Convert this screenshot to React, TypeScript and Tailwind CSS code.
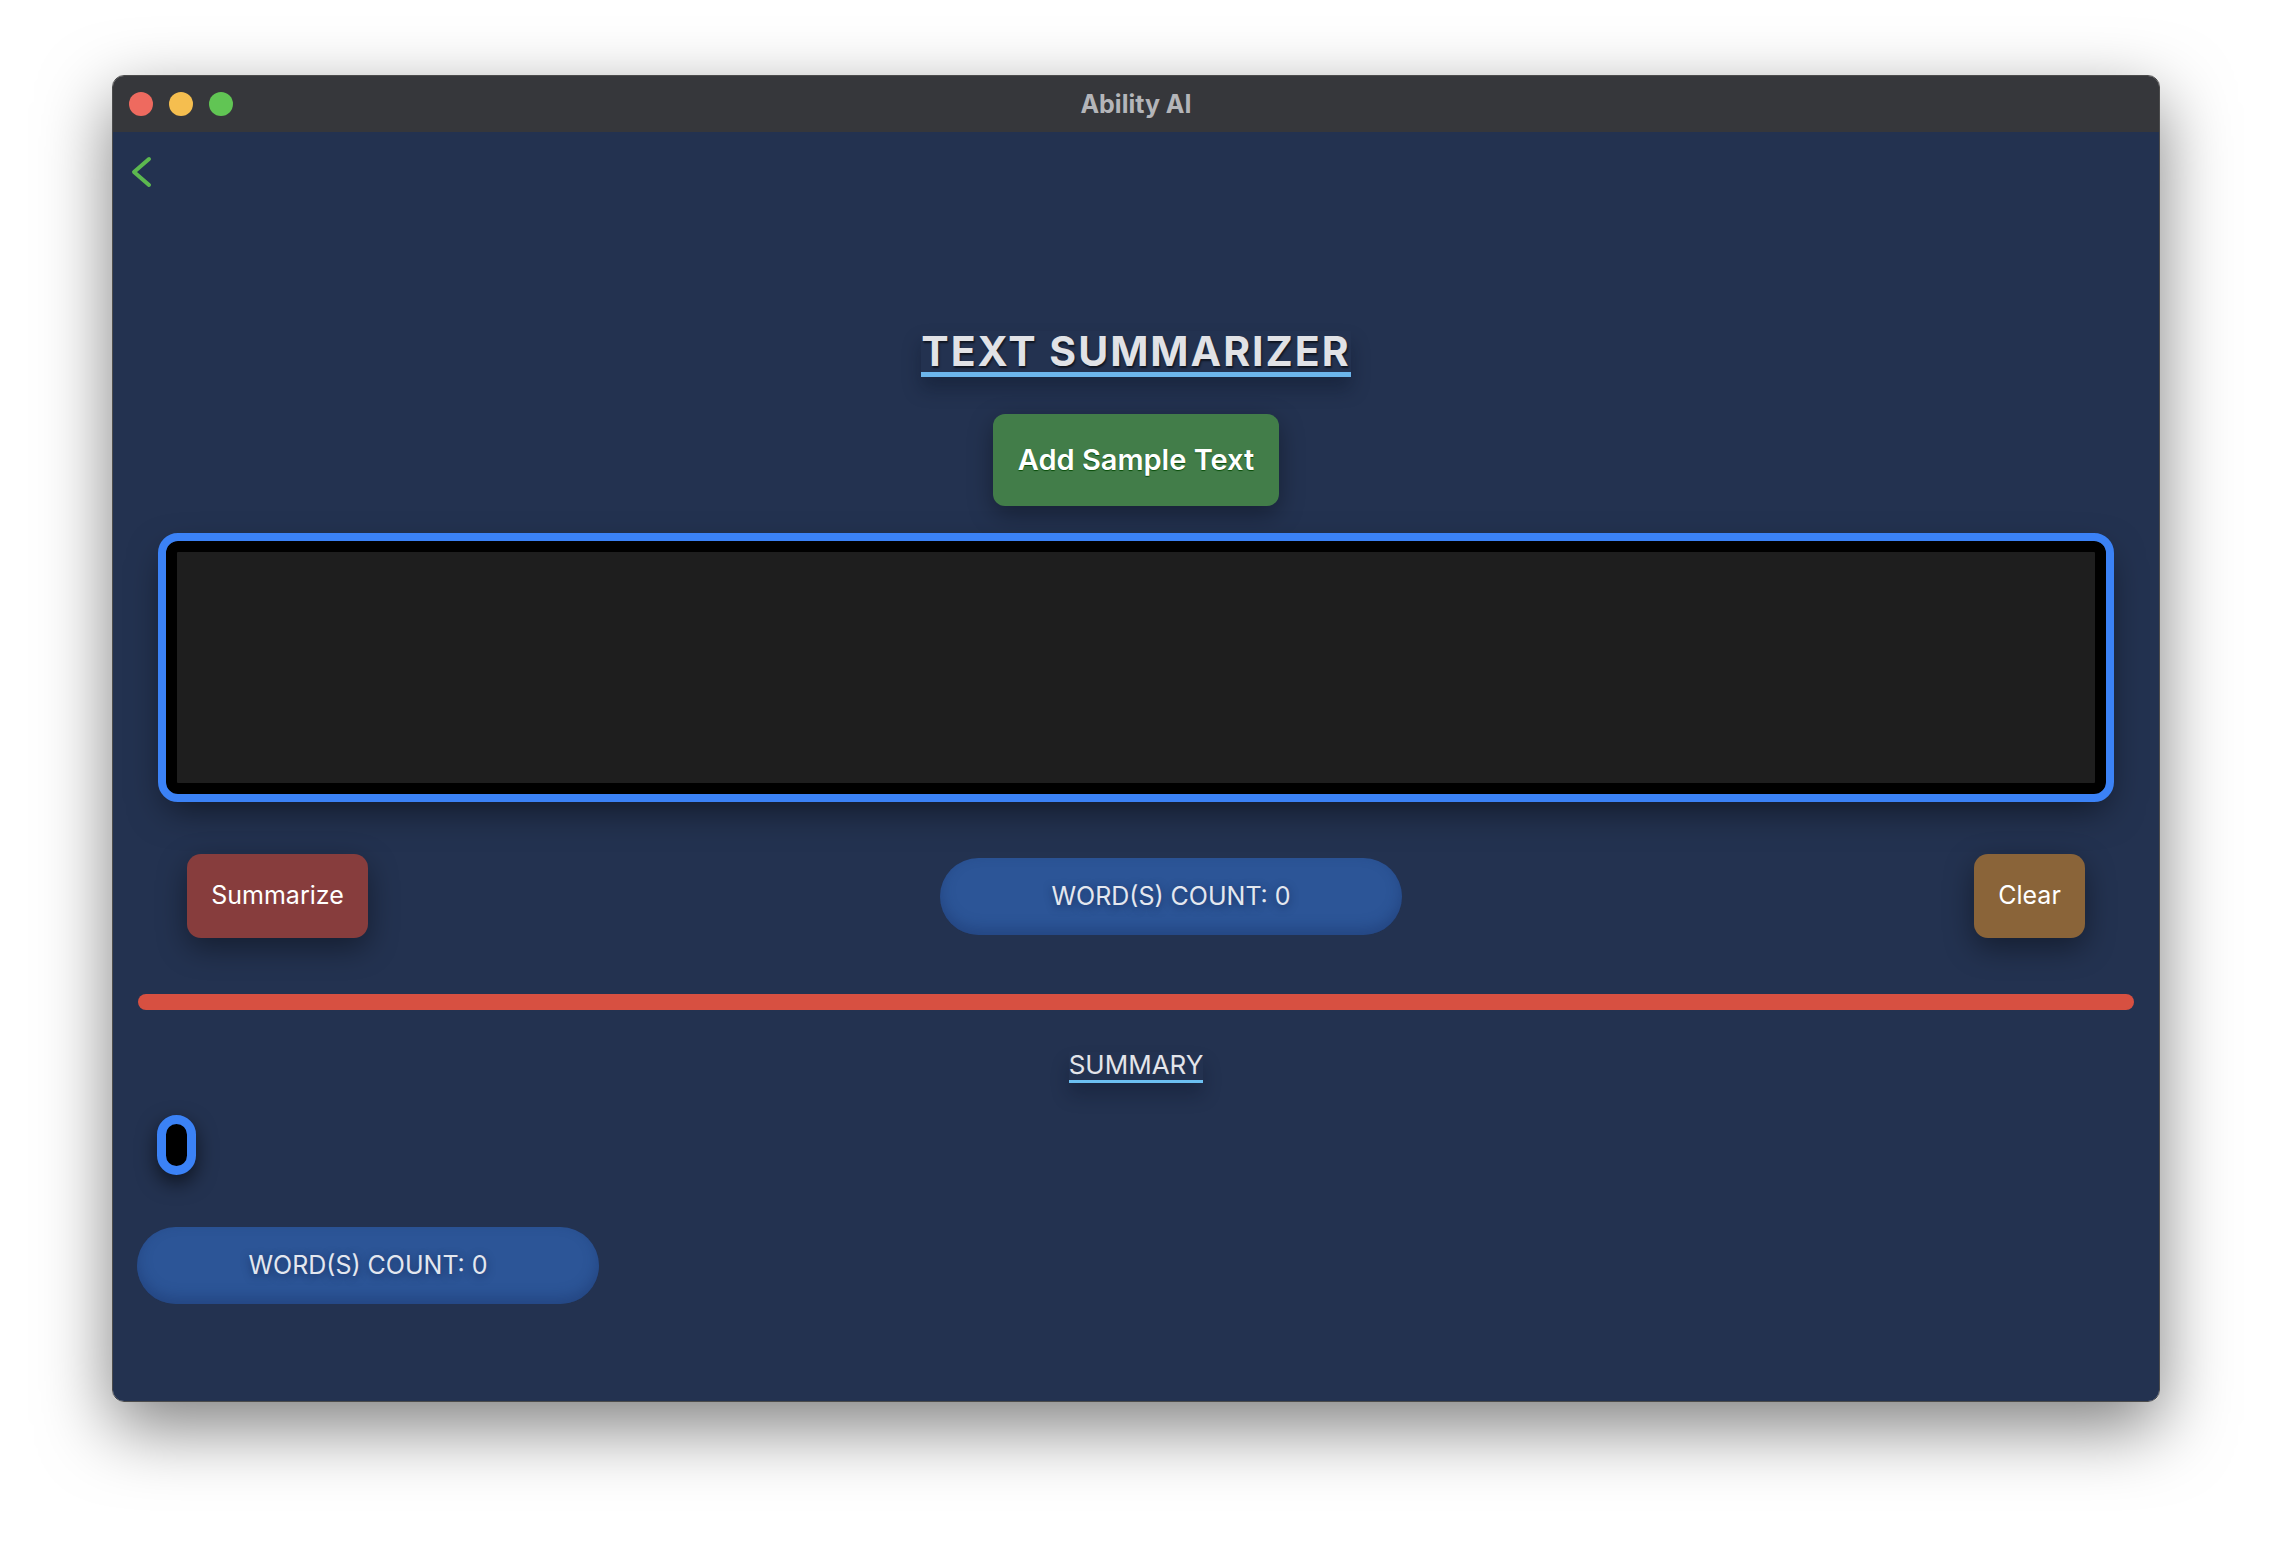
import React from 'react';

const font = { fontFamily: 'Inter, "Noto Sans", sans-serif' };

function TrafficLights() {
  return (
    <div className="flex items-center gap-[16px] pl-[16px]">
      <span className="block w-[24px] h-[24px] rounded-full bg-[#ee6a5f]" />
      <span className="block w-[24px] h-[24px] rounded-full bg-[#f5be4f]" />
      <span className="block w-[24px] h-[24px] rounded-full bg-[#61c554]" />
    </div>
  );
}

function WordCount() {
  return (
    <div className="w-[462px] h-[77px] rounded-full bg-[#2c5597] flex items-center justify-center shadow-[inset_0_-6px_14px_rgba(20,40,90,0.35)]">
      <span className="text-[25px] leading-none text-[#e3e7ef] [text-shadow:0_2px_8px_rgba(15,30,70,0.7)]">
        WORD(S) COUNT: 0
      </span>
    </div>
  );
}

export default function App() {
  return (
    <div className="w-[2272px] h-[1550px] bg-white pt-[75px] pl-[112px]" style={font}>
      <div className="w-[2048px] h-[1327px] rounded-[12px] overflow-hidden border border-black/70 shadow-[0_25px_70px_rgba(0,0,0,0.5)] flex flex-col">
        {/* title bar */}
        <div className="relative h-[56px] bg-[#36373b] flex items-center shrink-0">
          <TrafficLights />
          <div className="absolute inset-0 flex items-center justify-center">
            <span className="text-[25px] font-bold text-[#b4b5b9] leading-none">Ability AI</span>
          </div>
        </div>

        {/* content */}
        <div className="flex-1 bg-[#233250] flex flex-col">
          <div className="pl-[18px] pt-[24px]">
            <svg width="22" height="32" viewBox="0 0 22 32" fill="none">
              <polyline
                points="18,3 3,16 18,29"
                stroke="#5cb84f"
                strokeWidth="4"
                strokeLinecap="round"
                strokeLinejoin="round"
              />
            </svg>
          </div>

          <div className="flex justify-center mt-[143px]">
            <h1 className="inline-block text-[41px] leading-none font-bold tracking-[2px] text-[#e1e2e6] border-b-[5px] border-[#6cb6ec] [text-shadow:1px_2px_2px_rgba(0,0,0,0.6)] shadow-[0_12px_18px_rgba(10,18,35,0.35)]">
              TEXT SUMMARIZER
            </h1>
          </div>

          <div className="flex justify-center mt-[37px]">
            <button className="w-[286px] h-[92px] rounded-[12px] bg-[#427d49] text-white text-[29px] font-semibold shadow-[0_8px_24px_rgba(0,0,0,0.35)] [text-shadow:0_1px_1px_rgba(0,70,0,0.9)]">
              Add Sample Text
            </button>
          </div>

          <div className="mx-[53px] mt-[35px] h-[253px] rounded-[12px] border-[11px] border-black bg-[#1e1e1e] outline-[8px] outline-solid outline-[#3b82f6] shadow-[0_14px_36px_rgba(0,0,0,0.55)]" />

          <div className="flex items-center justify-between px-[74px] mt-[60px]">
            <button className="w-[181px] h-[84px] rounded-[14px] bg-[#873d3d] text-white text-[25px] shadow-[0_10px_30px_rgba(0,0,0,0.4)]">
              Summarize
            </button>
            <WordCount />
            <button className="w-[111px] h-[84px] rounded-[14px] bg-[#8a6439] text-white text-[25px] shadow-[0_10px_30px_rgba(0,0,0,0.4)]">
              Clear
            </button>
          </div>

          <div className="mx-[25px] mt-[56px] h-[16px] rounded-full bg-[#d75041]" />

          <div className="flex justify-center mt-[42px]">
            <h2 className="inline-block text-[26px] leading-none text-[#e3e5ea] pb-[2px] border-b-[3px] border-[#6cc0f2] shadow-[0_12px_18px_rgba(10,18,35,0.3)]">
              SUMMARY
            </h2>
          </div>

          <div className="ml-[44px] mt-[32px] w-[39px] h-[60px] rounded-full border-[9px] border-[#3b82f6] bg-black shadow-[0_8px_20px_rgba(0,0,0,0.6)]" />

          <div className="ml-[24px] mt-[52px]">
            <WordCount />
          </div>
        </div>
      </div>
    </div>
  );
}
